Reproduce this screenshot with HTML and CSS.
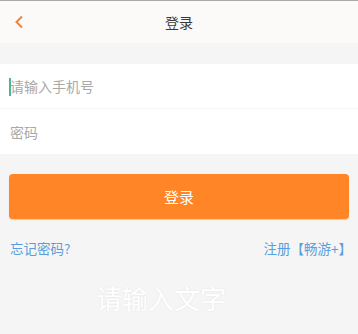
FILE: index.html
```html
<!DOCTYPE html>
<html lang="zh">
<head>
<meta charset="utf-8">
<link rel="stylesheet" href="styles.css">
</head>
<body>
<div class="page">
  <header class="nav">
    <span class="back">
      <svg width="10" height="14" viewBox="0 0 10 14"><path d="M8 1.5 L2.5 7 L8 12.5" fill="none" stroke="#e8873a" stroke-width="2"/></svg>
    </span>
    <span class="title">登录</span>
  </header>
  <div class="form">
    <div class="field"><span class="cursor"></span><span class="ph">请输入手机号</span></div>
    <div class="field"><span class="ph">密码</span></div>
  </div>
  <div class="btn-wrap"><div class="btn">登录</div></div>
  <div class="links">
    <span class="link">忘记密码?</span>
    <span class="link">注册【畅游+】</span>
  </div>
  <div class="watermark">请输入文字</div>
</div>
</body>
</html>
```
FILE: styles.css
```css
html, body {
  margin: 0;
  padding: 0;
}
body {
  background: #f5f5f5;
  font-family: "Noto Sans CJK SC", "Noto Sans", sans-serif;
}
.page {
  width: 358px;
  height: 334px;
  overflow: hidden;
  border-top: 1px solid #a9a9a9;
  box-sizing: border-box;
}
.nav {
  position: relative;
  height: 42px;
  background: #fbfaf9;
  display: flex;
  align-items: center;
  justify-content: center;
}
.back {
  position: absolute;
  left: 14px;
  top: 14px;
  display: flex;
}
.title {
  font-size: 14px;
  color: #3a3a3a;
  line-height: 1;
}
.form {
  margin-top: 21px;
  display: flex;
  flex-direction: column;
  gap: 1px;
}
.field {
  height: 44px;
  background: #fff;
  display: flex;
  align-items: center;
  padding-left: 10px;
  position: relative;
}
.field + .field {
  height: 45px;
}
.cursor {
  position: absolute;
  left: 9px;
  top: 14px;
  width: 2px;
  height: 18px;
  background: #4fb39a;
}
.ph {
  font-size: 14px;
  color: #a9a9a9;
}
.btn-wrap {
  padding: 20px 9px 0;
}
.btn {
  height: 45px;
  border-radius: 4px;
  background: #ff8526;
  color: #fff;
  font-size: 15px;
  display: flex;
  align-items: center;
  justify-content: center;
  box-shadow: 0 1px 1px rgba(200, 100, 20, 0.3);
}
.links {
  display: flex;
  justify-content: space-between;
  padding: 19px 6px 0 10px;
}
.link {
  font-size: 13.5px;
  color: #5a9fdc;
  line-height: 20px;
}
.watermark {
  margin: 25px 0 0 96px;
  font-size: 26px;
  color: #fff;
  line-height: 30px;
  text-shadow: 0 0 2px rgba(0,0,0,0.08);
}
```
